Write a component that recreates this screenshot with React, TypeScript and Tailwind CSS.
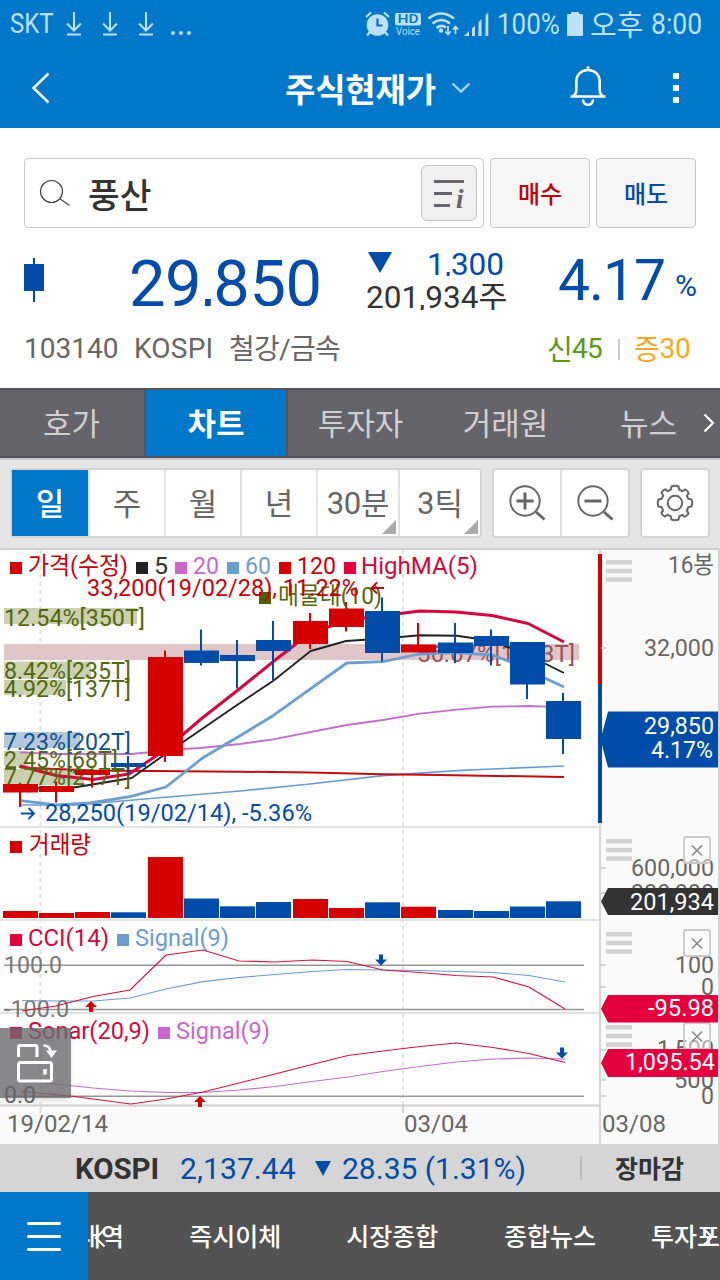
import React from 'react';

/* ---------- status bar ---------- */

function DownloadIcon() {
  return (
    <svg width="18" height="26" viewBox="0 0 18 26" fill="none" stroke="#bfe0fb" strokeWidth="2">
      <path d="M9 1v19M2 12.500l7 7 7-7M2 23.500h14" />
    </svg>
  );
}

function StatusBar() {
  return (
    <div className="flex h-12 items-center text-[#bfe0fb]">
      <span className="ml-[10px] w-[55px] origin-left scale-x-[.84] text-[28.5px] leading-[48px]">SKT</span>
      <div className="flex gap-[18px]">
        <DownloadIcon />
        <DownloadIcon />
        <DownloadIcon />
      </div>
      <svg className="ml-4" width="22" height="24" viewBox="0 0 22 24" fill="#bfe0fb">
        <circle cx="2" cy="21" r="2" />
        <circle cx="10" cy="21" r="2" />
        <circle cx="18" cy="21" r="2" />
      </svg>
      <div className="flex-1" />
      <svg width="126" height="28" viewBox="364 10 126 28" fill="#bfe0fb">
        <circle cx="377.500" cy="25" r="10.800" />
        <path d="M366 17l5-4.500M389 17l-5-4.500M370 32l-3 3.500M385 32l3 3.500" stroke="#bfe0fb" strokeWidth="2.200" />
        <path d="M377.500 18.500v7h5" fill="none" stroke="#0077c8" strokeWidth="2.200" />
        <rect x="395" y="13" width="26" height="12.500" rx="2" />
        <text x="397.500" y="23.300" fontSize="12" fontWeight="500" fill="#0077c8" textLength="21" lengthAdjust="spacingAndGlyphs">HD</text>
        <text x="396" y="34.500" fontSize="10" textLength="24" lengthAdjust="spacingAndGlyphs">Voice</text>
        <g fill="none" stroke="#bfe0fb" strokeWidth="2.600">
          <path d="M428.500 18.500q12.500-10 25.500 0" />
          <path d="M432.500 23.500q8.800-7 17.500 0" />
          <path d="M436.500 28q4.800-4 9.500-.5" />
        </g>
        <circle cx="441" cy="30.500" r="2.200" />
        <path d="M448 26v8M445.300 31.500l2.700 3 2.700-3M455.500 34v-7M452.800 29.500l2.700-3 2.700 3" fill="none" stroke="#bfe0fb" strokeWidth="1.800" />
        <path d="M464 36l5-5v5zM472 28.500l3-3V36h-3zM478.500 22l3-3v17h-3zM485.500 15.500l2.800-3V36h-2.800z" />
      </svg>
      <span className="ml-[7px] w-[66px] origin-left scale-x-[.88] text-[29.5px] leading-[48px]">100%</span>
      <svg className="ml-1" width="16" height="24" viewBox="0 0 16 24" fill="#bfe0fb">
        <path d="M4 0h8v2h3a1 1 0 0 1 1 1v20a1 1 0 0 1-1 1H1a1 1 0 0 1-1-1V3a1 1 0 0 1 1-1h3z" />
      </svg>
      <span className="ml-[7px] w-[61px] pt-[3px] text-[29px] leading-[48px]">오후</span>
      <span className="w-[69px] origin-left scale-x-[.9] text-[29.5px] leading-[48px]">8:00</span>
    </div>
  );
}

function TitleBar() {
  return (
    <div className="flex h-20 items-center text-white">
      <svg className="ml-8" width="18" height="32" viewBox="0 0 18 32" fill="none" stroke="#fff" strokeWidth="2.600">
        <path d="M16.500 1.500L1.500 16l15 14.500" />
      </svg>
      <h1 className="ml-[235px] w-[152px] whitespace-nowrap pt-[5px] text-[33px] font-bold leading-[80px] tracking-[-.2px]">주식현재가</h1>
      <svg className="ml-[14px]" width="20" height="14" viewBox="0 0 20 14" fill="none" stroke="#a5d8ff" strokeWidth="2.400">
        <path d="M1.500 2.500l8.500 8 8.500-8" />
      </svg>
      <svg className="-mt-[3px] ml-[99px]" width="36" height="42" viewBox="0 0 36 42" fill="none" stroke="#fff" strokeWidth="2.600">
        <path d="M18 .5v4M.5 30.500h35M3 30c3.500-1.500 3.300-4 3.300-7v-7C6.300 8.500 11.500 4 18 4s11.700 4.500 11.700 12v7c0 3-.2 5.500 3.300 7" />
        <path d="M13 33.500c0 7 10 7 10 0" />
      </svg>
      <div className="ml-[67px] flex flex-col gap-[6px]">
        <i className="size-[6px] bg-white" />
        <i className="size-[6px] bg-white" />
        <i className="size-[6px] bg-white" />
      </div>
    </div>
  );
}

/* ---------- quote ---------- */

function SearchRow() {
  return (
    <div className="flex h-[70px] gap-[6px] px-6">
      <div className="flex w-[460px] items-center rounded border border-[#c8c8c8] pr-[6px]">
        <svg className="ml-[14px]" width="32" height="28" viewBox="0 0 32 28" fill="none" stroke="#444" strokeWidth="1.200">
          <circle cx="12.500" cy="12.500" r="11" />
          <path d="M20.500 19.500l10 7" />
        </svg>
        <span className="ml-[17px] flex-1 pt-[6px] text-[34.5px] font-medium leading-[62px] text-[#333]">풍산</span>
        <div className="flex size-14 items-center justify-center rounded-md border border-[#c4c4c4] bg-[#f0f0f0]">
          <svg width="32" height="32" viewBox="0 0 32 32">
            <path d="M1 4.500h30M1 16.500h18M1 28.500h16" stroke="#666469" strokeWidth="3" />
            <text x="23" y="30.500" fontSize="27" fontWeight="700" fontStyle="italic" fill="#666469" fontFamily="Liberation Serif, serif">i</text>
          </svg>
        </div>
      </div>
      <button className="w-[100px] rounded border border-[#c8c8c8] bg-[#f6f6f6] pt-[4px] text-[24px] font-medium text-[#c00008]">매수</button>
      <button className="w-[100px] rounded border border-[#c8c8c8] bg-[#f6f6f6] pt-[4px] text-[24px] font-medium text-[#004ca8]">매도</button>
    </div>
  );
}

function PriceRow() {
  return (
    <div className="flex h-[94px] items-start text-[#004ca8]">
      <svg className="ml-6 mt-[30px]" width="20" height="44" viewBox="0 0 20 44" fill="#004ca8">
        <path d="M9 0h2v6h9v27h-9v11H9V33H0V6h9z" />
      </svg>
      <div className="ml-[85px] mt-[18px] h-[60px] w-[200px] overflow-hidden whitespace-nowrap text-[65px] leading-[76px] tracking-[-.5px]">29,850</div>
      <div className="ml-[37px] mt-[19px] flex w-[146px] flex-col">
        <div className="flex h-8 items-start justify-between overflow-hidden pr-[8px]">
          <svg className="ml-[1px] mt-[5px]" width="26" height="21" viewBox="0 0 26 21" fill="#004ca8">
            <path d="M1 0h24L13 21z" />
          </svg>
          <span className="h-[29px] overflow-hidden text-[31.5px] leading-[36px]">1,300</span>
        </div>
        <div className="h-[31px] overflow-hidden whitespace-nowrap text-[31.5px] leading-[38px] text-[#333]">
          201,934<span className="relative top-[1px]">주</span>
        </div>
      </div>
      <div className="ml-[46px] mt-[18px] w-[117px] text-[57px] leading-[70px] tracking-[-1px]">4.17</div>
      <div className="mt-[40px] text-[30px] leading-[36px]">%</div>
    </div>
  );
}

function InfoRow() {
  return (
    <div className="flex h-10 items-center whitespace-nowrap text-[28px] leading-[40px] text-[#666]">
      <span className="ml-6 w-[110px]">103140</span>
      <span className="w-[95px] tracking-[.2px]">KOSPI</span>
      <span className="w-[318px] pt-[2px] tracking-[-.7px]">철강/금속</span>
      <span className="w-[71px] tracking-[-.7px] text-[#5a9a14]"><span className="relative top-[2px]">신</span>45</span>
      <i className="h-[21px] w-[2px] bg-[#ccc]" />
      <span className="ml-[14px] tracking-[-.2px] text-[#f7a722]"><span className="relative top-[2px]">증</span>30</span>
    </div>
  );
}

/* ---------- tabs and toolbar ---------- */

function Tabs() {
  return (
    <nav className="flex h-[70px] items-center border-y-2 border-[#55545a] bg-[#65646a] text-[31px] leading-[70px] text-[#d0d0d2]">
      <div className="h-full w-[146px] border-r-2 border-[#55545a] pl-[43px]">호가</div>
      <div className="h-full w-[140px] bg-[#0077c8] text-center font-bold text-white">차트</div>
      <div className="h-full w-[147px] border-l-2 border-[#55545a] text-center">투자자</div>
      <div className="h-full w-[145px] text-center">거래원</div>
      <div className="h-full w-[125px] pl-[42px]">뉴스</div>
      <svg width="12" height="20" viewBox="0 0 12 20" fill="none" stroke="#fff" strokeWidth="2.200">
        <path d="M1.500 1.500L10 10l-8.500 8.500" />
      </svg>
    </nav>
  );
}

function Corner() {
  return <i className="absolute bottom-[2px] right-[2px] size-[14px] bg-[#aaa] [clip-path:polygon(100%_0,100%_100%,0_100%)]" />;
}

function Toolbar() {
  return (
    <div className="flex h-[90px] items-start gap-[10px] border-t-2 border-[#c8c8c9] bg-[#e6e6e6] pl-[10px] pt-2 text-[31px] leading-[70px] text-[#666]">
      <div className="flex h-[70px] w-[472px] divide-x-2 divide-[#e2e2e2] rounded border-2 border-[#d5d5d5] bg-white text-center">
        <div className="w-[78px] bg-[#0077c8] font-medium text-white">일</div>
        <div className="w-[76px]">주</div>
        <div className="w-[76px]">월</div>
        <div className="w-[76px]">년</div>
        <div className="relative w-[82px] tracking-[-.3px]"><span className="relative -top-[1px]">30</span>분<Corner /></div>
        <div className="relative w-[80px]"><span className="relative -top-[1px]">3</span>틱<Corner /></div>
      </div>
      <div className="flex h-[70px] w-[138px] divide-x-2 divide-[#e2e2e2] rounded border-2 border-[#d5d5d5] bg-white">
        <div className="flex w-[68px] items-center justify-center">
          <svg width="38" height="38" viewBox="0 0 38 38" fill="none" stroke="#666">
            <circle cx="17" cy="17" r="14.700" strokeWidth="2" />
            <path d="M28 28l8.500 7.500" strokeWidth="3" />
            <path d="M8.500 17h17M17 8.500v17" strokeWidth="3" />
          </svg>
        </div>
        <div className="flex w-[66px] items-center justify-center">
          <svg width="38" height="38" viewBox="0 0 38 38" fill="none" stroke="#666">
            <circle cx="17" cy="17" r="14.700" strokeWidth="2" />
            <path d="M28 28l8.500 7.500" strokeWidth="3" />
            <path d="M8.500 17h17" strokeWidth="3" />
          </svg>
        </div>
      </div>
      <div className="flex h-[70px] w-[70px] items-center justify-center rounded border-2 border-[#d5d5d5] bg-white">
        <svg width="38" height="38" viewBox="-19 -19 38 38" fill="none" stroke="#666" strokeWidth="2" strokeLinejoin="round">
          <circle r="7.200" />
          <path d="M-3.500-16.500 Q0-18 3.500-16.500 L4.300-13.200 Q6-12.700 7.300-11.800 L10.500-13.500 Q13-12 13.700-9.500 L11.800-7.300 Q12.700-5.500 13.200-4.300 L16.500-3.500 Q18 0 16.500 3.500 L13.200 4.300 Q12.700 6 11.800 7.300 L13.500 10.500 Q12 13 9.500 13.700 L7.300 11.800 Q6 12.700 4.300 13.200 L3.500 16.500 Q0 18-3.500 16.500 L-4.300 13.200 Q-6 12.700-7.300 11.800 L-10.500 13.500 Q-13 12-13.700 9.500 L-11.800 7.300 Q-12.700 6-13.200 4.300 L-16.500 3.500 Q-18 0-16.500-3.500 L-13.200-4.300 Q-12.700-6-11.800-7.300 L-13.500-10.500 Q-12-13-9.500-13.700 L-7.300-11.800 Q-6-12.700-4.300-13.200 Z" />
        </svg>
      </div>
    </div>
  );
}

/* ---------- chart ---------- */

const RED = '#d40000';
const BLUE = '#004ca8';
const CRIMSON = '#e4003c';
const SKY = '#6a9dcf';
const VIOLET = '#c966cf';

type TProps = { x: number; x2: number; y: number; c: string; s?: number; children: string };

/** Chart text that spans exactly from x to x2 with its baseline at y. */
function T({ x, x2, y, c, s = 24, children }: TProps) {
  return (
    <text x={x} y={y} fontSize={s} fill={c} textLength={x2 - x} lengthAdjust="spacingAndGlyphs">
      {children}
    </text>
  );
}

// left, body top, body bottom, high, low, rising
const candles: [number, number, number, number, number, boolean][] = [
  [3, 784, 792.5, 784, 807, true],
  [39, 786, 792, 781.5, 802.5, true],
  [75, 770.5, 775, 770, 787.5, true],
  [111, 763, 767, 756, 775, false],
  [148, 657, 756, 650.5, 762, true],
  [184, 650.5, 663, 629.5, 665.5, false],
  [220, 655, 661, 640, 688.5, false],
  [256, 640, 651, 621, 681, false],
  [293, 621, 644, 613, 649, true],
  [329, 608.5, 627, 602, 631.5, true],
  [365, 611, 653, 597.5, 661.5, false],
  [401, 644.5, 652.5, 623, 652, true],
  [438, 642.5, 653, 623, 663, false],
  [474, 636, 646, 629.5, 665.5, false],
  [510, 642, 684.5, 642, 699, false],
  [546, 701, 739, 693, 754, false],
];

const volumeTops = [911, 913, 912, 912.3, 857, 898.5, 906.3, 902, 899, 908, 902.3, 906.7, 910, 911, 906.5, 901.3];

// label, bar top, bar height, bar width, text right edge, baseline, bar colour, text colour
const profile: [string, number, number, number, number, number, string, string][] = [
  ['12.54%[350T]', 608, 16, 133, 145, 626, '#cbd0b1', '#53680a'],
  ['8.42%[235T]', 661.5, 17, 87, 131, 679, '#cbd0b1', '#53680a'],
  ['4.92%[137T]', 680, 15, 62, 131, 697, '#cbd0b1', '#53680a'],
  ['7.23%[202T]', 732, 16, 76, 131, 750, '#b2c8dc', '#114f88'],
  ['2.45%[68T]', 751, 15, 24, 118, 768, '#cbd0b1', '#53680a'],
  ['7.77%[217T]', 769, 16, 80, 131, 785, '#cbd0b1', '#53680a'],
];

function Grip({ y }: { y: number }) {
  return <path d={`M606 ${y + 2.2}h26M606 ${y + 11}h26M606 ${y + 19.5}h26`} stroke="#d3d3d3" strokeWidth="4.600" />;
}

function Close({ y }: { y: number }) {
  return (
    <g fill="none">
      <rect x="684" y={y} width="26" height="26" rx="2.500" fill="#fafafa" fillOpacity=".5" stroke="#c8c8c8" strokeWidth="1.800" />
      <path d={`M692 ${y + 8.5}l10 10M702 ${y + 8.5}l-10 10`} stroke="#888" strokeWidth="1.600" />
    </g>
  );
}

function Tag({ y, h, c }: { y: number; h: number; c: string }) {
  return <path d={`M608 ${y}H718V${y + h}H608L601 ${y + h / 2}Z`} fill={c} />;
}

function Up({ x, y }: { x: number; y: number }) {
  return <path d={`M${x} ${y}l6 6h-4v5h-4v-5h-4z`} fill={RED} />;
}

function Down({ x, y }: { x: number; y: number }) {
  return <path d={`M${x} ${y}l6-6h-4v-5h-4v5h-4z`} fill={BLUE} />;
}

function Chart() {
  const gray = '#666';
  return (
    <div className="relative h-[596px]">
      <svg className="block" width="720" height="596" viewBox="0 548 720 596">
        <rect x="0" y="548" width="720" height="596" fill="#fff" />
        <rect x="600" y="550" width="119" height="594" fill="#fafafa" />
        <rect x="0" y="1106" width="599" height="38" fill="#fafafa" />
        <rect x="0" y="548" width="720" height="2" fill="#cfcfcf" />
        <path d="M40.500 550V1105M403 550V1105" stroke="#e0e0e0" strokeWidth="2" strokeDasharray="4 4" />
        <path d="M40.500 1107v6M403 1107v6" stroke="#d5d5d5" strokeWidth="2" />
        <path d="M0 827H599M0 920H599M0 1013H599" stroke="#e2e2e2" strokeWidth="2" />
        <path d="M0 1105.500H599" stroke="#cfcfcf" strokeWidth="2" />
        <path d="M600 550V1144M719 550V1144" stroke="#d4d4d4" strokeWidth="2" />

        <rect x="4" y="644" width="575" height="16" fill="#e0c6c9" />
        {profile.map(([label, top, h, w, , , bar]) => (
          <rect key={label} x="4" y={top} width={w} height={h} fill={bar} />
        ))}
        <T x={417} x2={575} y={661.5} c="#98505a">56.67%[1583T]</T>

        <g fill="none" strokeLinejoin="round">
          <path d="M20 752.300L56 754H131L183 749 200 748 240 744 273 739.300 346.700 725 383 720 420 713.700 456.700 709.700 492.700 706.700 528.700 706 546 706.700" stroke="#c070cc" strokeWidth="1.800" />
          <path d="M20 805H77L133 800 240 791 310 784 383 775.700 456.700 770.700 492 769 564 766" stroke={SKY} strokeWidth="1.700" />
          <path d="M20 767.500L93 770.500 240 771.700 310 772.500 383 774.300 440 775 564 777" stroke="#c40c10" strokeWidth="2" />
          <path d="M20.500 800.700L56 805 90 803 130 796.700 166 787 203 757.700 240 735.700 273 715.700 346.700 663 383 661.700 420 654 456 652.500 492.700 655 510 661.700 564 687" stroke="#6c9fd0" strokeWidth="2.800" />
          <path d="M20 789L74 787.500 131.700 778 163 755.700 240 703 273 681 310.700 651 346 641 365 639.700 400 637 420 635.300 456.700 635.700 492.700 641 528 655 564 673" stroke="#222" strokeWidth="1.900" />
          <path d="M20 766L56 775.500 93 779.500 129 774 165 750 201 719 238 690 274 661 310 633 346 621 382 615 400 613.500 420 611 456 612 492 615.500 528 623.500 564 642" stroke="#d6063e" strokeWidth="3" />
        </g>

        {profile.map(([label, , , , right, base, , color]) => (
          <T key={label} x={4} x2={right} y={base} c={color}>
            {label}
          </T>
        ))}

        {candles.map(([x, top, bottom, high, low, rising]) => (
          <g key={x} fill={rising ? RED : BLUE}>
            <rect x={x} y={top} width="35" height={bottom - top} />
            <rect x={x + 16} y={high} width="2" height={low - high} />
          </g>
        ))}

        <rect x="10" y="562" width="12" height="12" fill={RED} />
        <T x={28} x2={128} y={574} c="#c8000c">가격(수정)</T>
        <rect x="136" y="562" width="12" height="12" fill="#222" />
        <T x={154} x2={168} y={574} c="#333">5</T>
        <rect x="175" y="562" width="12" height="12" fill={VIOLET} />
        <T x={193} x2={219} y={574} c={VIOLET}>20</T>
        <rect x="227" y="562" width="12" height="12" fill={SKY} />
        <T x={245} x2={271} y={574} c={SKY}>60</T>
        <rect x="279" y="562" width="12" height="12" fill={RED} />
        <T x={297} x2={336} y={574} c="#c8000c">120</T>
        <rect x="344" y="562" width="12" height="12" fill={CRIMSON} />
        <T x={361} x2={478} y={574} c="#d4083e">HighMA(5)</T>
        <rect x="259" y="592" width="12" height="12" fill="#4d5f08" />
        <T x={278} x2={382} y={604} c="#53680a">매물대(10)</T>
        <T x={87} x2={359} y={596} c="#c8000c">33,200(19/02/28), 11.22%</T>
        <path d="M384 588H372M377 582.500l-5.500 5.500 5.500 5.500" fill="none" stroke="#c8000c" strokeWidth="1.800" />
        <T x={45} x2={312} y={821} c={BLUE}>28,250(19/02/14), -5.36%</T>
        <path d="M21 813.500H34M28.500 808l5.500 5.500-5.500 5.500" fill="none" stroke={BLUE} strokeWidth="1.800" />

        <rect x="598" y="554" width="4" height="130" fill={RED} />
        <rect x="598" y="684" width="4" height="139" fill={BLUE} />
        <path d="M601 648h5M601 868h5M601 893h5M601 965h5M601 987h5M601 1050h5M601 1080h5M601 1096h5" stroke="#d4d4d4" strokeWidth="2" />
        <Grip y={560} />
        <T x={668} x2={714} y={572.5} c={gray}>16봉</T>
        <T x={644} x2={714} y={656} c={gray}>32,000</T>
        <path d="M608 711.500H718V767.500H608L602 745V734Z" fill={BLUE} />
        <T x={644} x2={714} y={733.5} c="#fff">29,850</T>
        <T x={651} x2={713} y={757.5} c="#fff">4.17%</T>

        {volumeTops.map((top, i) => (
          <rect key={i} x={candles[i][0]} y={top} width="35" height={918 - top} fill={candles[i][5] ? RED : BLUE} />
        ))}
        <rect x="10" y="841" width="12" height="12" fill={RED} />
        <T x={29} x2={91} y={853} c="#c8000c">거래량</T>
        <Grip y={839} />
        <T x={631} x2={714} y={876} c={gray}>600,000</T>
        <T x={631} x2={714} y={901} c={gray}>300,000</T>
        <Close y={837} />
        <Tag y={888} h={27} c="#333" />
        <T x={630} x2={714} y={909.5} c="#fff">201,934</T>

        <rect x="10" y="934" width="12" height="12" fill={CRIMSON} />
        <T x={28} x2={109} y={946} c="#d4083e">CCI(14)</T>
        <rect x="117" y="934" width="12" height="12" fill={SKY} />
        <T x={135} x2={229} y={946} c={SKY}>Signal(9)</T>
        <path d="M4 965.200H584M4 1009.500H584" stroke="#969696" strokeWidth="1.400" />
        <T x={4} x2={62} y={973} c="#777">100.0</T>
        <T x={4} x2={69} y={1017} c="#777">-100.0</T>
        <path d="M22 1000.500L56 1001H93L130 998 166 989 203 981.700 239 977.500 275 974.500 312 971.500 347 969.500 383 970 420 970.500 456 971.500 493 972.500 529 975.500 565 982" fill="none" stroke={SKY} strokeWidth="1.200" />
        <path d="M22 1011L56 1006 93 996.500 130 990 166 955 203 950 239 961 275 962 312 960 347 961.500 383 970 420 972.500 456 975.500 493 977 529 987 565 1009" fill="none" stroke="#cf1440" strokeWidth="1.200" />
        <Up x={91} y={1001} />
        <Down x={381} y={965.5} />
        <Grip y={932} />
        <T x={675} x2={714} y={973} c={gray}>100</T>
        <T x={701} x2={714} y={995} c={gray}>0</T>
        <Close y={930} />
        <Grip y={1025} />
        <T x={657} x2={714} y={1057} c={gray}>1,500</T>
        <Close y={1023} />
        <Tag y={995} h={27.5} c={CRIMSON} />
        <T x={648} x2={714} y={1016} c="#fff">-95.98</T>

        <rect x="10" y="1027" width="12" height="12" fill={CRIMSON} />
        <T x={28} x2={150} y={1039} c="#d4083e">Sonar(20,9)</T>
        <rect x="158" y="1027" width="12" height="12" fill={VIOLET} />
        <T x={176} x2={270} y={1039} c={VIOLET}>Signal(9)</T>
        <path d="M4 1096.300H584" stroke="#969696" strokeWidth="1.400" />
        <path d="M22 1081L56 1084 93 1088 130 1091 166 1092.500H203L239 1090 275 1086.500 312 1081.500 348 1077 383 1071.500 420 1066.500 456 1062 493 1059 529 1058 565 1059" fill="none" stroke="#c070cc" strokeWidth="1.200" />
        <path d="M22 1091.500L70 1096 131 1104 166 1099 203 1092 239 1083 275 1074 312 1064.500 348 1055.500 383 1051 420 1046.500 456 1043 493 1047.500 529 1053.500 565 1062.500" fill="none" stroke="#cf1440" strokeWidth="1.200" />
        <Up x={200} y={1096} />
        <Down x={562} y={1058.5} />
        <T x={674} x2={714} y={1088} c={gray}>500</T>
        <T x={701} x2={714} y={1104} c={gray}>0</T>
        <Tag y={1049} h={28} c={CRIMSON} />
        <T x={625} x2={715} y={1070} c="#fff">1,095.54</T>

        <T x={7} x2={108} y={1132} c={gray}>19/02/14</T>
        <T x={404} x2={468} y={1132} c={gray}>03/04</T>
        <T x={602} x2={666} y={1132} c={gray}>03/08</T>
      </svg>
      <button className="absolute left-0 top-[480px] h-[70px] w-[71px] bg-[#6a6a6e]/80 shadow-md">
        <svg width="71" height="70" viewBox="0 0 71 70" fill="none" stroke="#fff" strokeWidth="3">
          <path d="M18.500 29V19q0-1.500 1.500-1.500h15.500q1.500 0 1.500 1.500v10" />
          <rect x="18.500" y="34.500" width="33" height="18.500" rx="2" />
          <path d="M45 41v5.500" strokeWidth="3.500" />
          <path d="M43.500 17.500q6.500 0 7.500 7" strokeWidth="2.400" />
          <path d="M46 22.500h11L51.500 30z" fill="#fff" stroke="none" />
        </svg>
        <svg className="absolute left-0 top-[42px]" width="36" height="36" viewBox="0 0 36 36">
          <text x="4" y="33" fontSize="24" fill="#666" textLength="32" lengthAdjust="spacingAndGlyphs">0.0</text>
        </svg>
      </button>
    </div>
  );
}

/* ---------- footer ---------- */

function IndexBar() {
  return (
    <div className="flex h-12 items-center whitespace-nowrap bg-[#d5d5d5] text-[30px] leading-[48px] text-[#004ca8]">
      <b className="ml-[75px] w-[105px] pt-px text-[29.5px] tracking-[-.1px] text-[#333]">KOSPI</b>
      <span className="w-[135px] pt-px tracking-[.1px]">2,137.44</span>
      <svg width="16" height="15" viewBox="0 0 16 15" fill="#004ca8">
        <path d="M0 0h16L8 15z" />
      </svg>
      <span className="ml-[11px] w-[238px] pt-px">28.35 (1.31%)</span>
      <i className="h-6 w-[2px] bg-[#bbb]" />
      <span className="ml-[33px] pt-[4px] text-[25px] font-bold text-[#333]">장마감</span>
    </div>
  );
}

function BottomNav() {
  return (
    <nav className="flex h-[88px] bg-[#535353] text-white">
      <div className="flex w-[88px] flex-col items-center justify-center gap-[10px] bg-[#0077c8]">
        <i className="h-[3px] w-[34px] rounded-full bg-white" />
        <i className="h-[3px] w-[34px] rounded-full bg-white" />
        <i className="h-[3px] w-[34px] rounded-full bg-white" />
      </div>
      <div className="relative flex flex-1 overflow-hidden whitespace-nowrap text-[25px] font-medium leading-[92px]">
        <span className="ml-[-10px] w-[112px]">내역</span>
        <span className="w-[158px]">즉시이체</span>
        <span className="w-[159px]">시장종합</span>
        <span className="w-[148px]">종합뉴스</span>
        <span>투자포</span>
        <svg className="absolute left-[6px] top-[36px]" width="12" height="20" viewBox="0 0 12 20" fill="none" stroke="#fff" strokeWidth="2">
          <path d="M10.500 1.500L2 10l8.500 8.500" />
        </svg>
        <svg className="absolute right-[6px] top-[35px]" width="12" height="20" viewBox="0 0 12 20" fill="none" stroke="#fff" strokeWidth="2">
          <path d="M1.500 1.500L10 10l-8.500 8.500" />
        </svg>
      </div>
    </nav>
  );
}

export default function App() {
  return (
    <div className="h-[1280px] w-[720px] overflow-hidden bg-white font-['Roboto','Noto_Sans_CJK_KR',sans-serif]">
      <header className="bg-[#0077c8]">
        <StatusBar />
        <TitleBar />
      </header>
      <section className="h-[260px] pt-[30px]">
        <SearchRow />
        <PriceRow />
        <div className="pt-[7px]">
          <InfoRow />
        </div>
      </section>
      <Tabs />
      <Toolbar />
      <Chart />
      <IndexBar />
      <BottomNav />
    </div>
  );
}
